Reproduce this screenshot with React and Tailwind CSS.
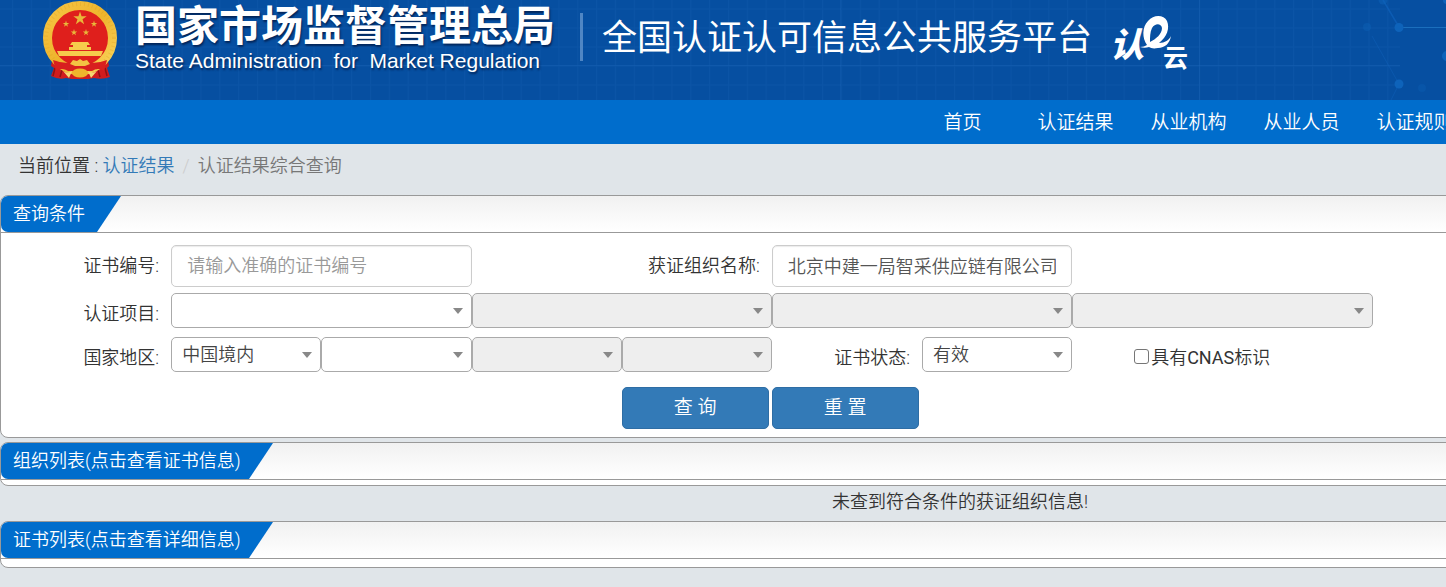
const FONT = "font-['Roboto','Noto_Sans_CJK_SC',sans-serif]";

function Backdrop() {
  return (
    <svg className="absolute inset-0 h-full w-full" aria-hidden="true">
      <defs>
        <pattern id="cells" width="18.84" height="19" x="12" y="8.5" patternUnits="userSpaceOnUse">
          <path d="M0.5 0V19M0 0.5H19" stroke="#1762b3" strokeOpacity="0.3" fill="none" />
        </pattern>
      </defs>
      <rect width="1400" height="100" fill="url(#cells)" />
      <path d="M0 65.500H1400M840.500 0V100M1199.500 0V100" stroke="#2a74c2" strokeOpacity="0.22" />
      <g stroke="#1164bf" strokeOpacity="0.6" fill="none">
        <path d="M1383 0L1399 27" strokeWidth="1.500" />
        <path d="M1399 27.500H1446" stroke="#2a86d0" />
        <path d="M1372 36L1399 84L1391 100" strokeOpacity="0.4" />
      </g>
      <g fill="#0e63ba">
        <circle cx="1399" cy="27.500" r="4.500" />
        <circle cx="1399" cy="84" r="4.500" />
        <circle cx="1367" cy="27" r="4" fillOpacity="0.4" />
        <circle cx="1383" cy="0" r="4.500" fillOpacity="0.5" />
        <circle cx="1422" cy="88" r="4" fillOpacity="0.3" />
        <circle cx="1447" cy="56" r="5" />
        <circle cx="1447" cy="0" r="4" />
      </g>
    </svg>
  );
}

const STAR = "M0 -1L0.225 -0.309L0.951 -0.309L0.363 0.118L0.588 0.809L0 0.382L-0.588 0.809L-0.363 0.118L-0.951 -0.309L-0.225 -0.309Z";

function Emblem() {
  return (
    <svg className="h-20 w-[76px] shrink-0" viewBox="0 0 76 80" role="img" aria-label="国徽">
      <defs>
        <linearGradient id="gold" x1="0" y1="0" x2="1" y2="1">
          <stop offset="0" stopColor="#f6c544" />
          <stop offset="0.5" stopColor="#eeb42c" />
          <stop offset="1" stopColor="#f9d55c" />
        </linearGradient>
      </defs>
      <path d="M11 56L9 66L12 68L9 76Q17 80 24 78L30 79H46L52 78Q60 80 68 77L65 68L67 66L65 56Z" fill="#d01c1e" />
      <path d="M13 68L11 76M20 70L18 77M56 70L58 77M63 68L65 76" stroke="#8f1213" strokeWidth="1.500" />
      <circle cx="38" cy="38" r="32" fill="#df1f1c" />
      <circle cx="38" cy="38" r="32.500" fill="none" stroke="url(#gold)" strokeWidth="9" />
      <circle cx="38" cy="38" r="34" fill="none" stroke="#d99a1e" strokeWidth="4" strokeDasharray="1 3" strokeOpacity="0.3" />
      <g fill="#e9b83a">
        <path d={STAR} transform="translate(38 18.500) scale(7)" />
        <path d={STAR} transform="translate(24 24) scale(3.400)" />
        <path d={STAR} transform="translate(52 24) scale(3.400)" />
        <path d={STAR} transform="translate(32 32.500) scale(3.400)" />
        <path d={STAR} transform="translate(44 32.500) scale(3.400)" />
      </g>
      <path d="M30 42H46L48 45H28ZM31 45H45V47H31ZM27 47H49V50H27ZM15 51H61L59 56H17Z" fill="#f6cb4c" />
      <path d="M11 60Q24 65 32 61Q38 58 44 61Q52 65 65 60L62 71Q56 67 50 71H26Q20 67 14 71Z" fill="#d81f1f" />
      <path d="M28 64L31 60L35 61L38 59L41 61L45 60L48 64L43 66H33Z" fill="#f3c343" />
      <ellipse cx="38" cy="73" rx="8" ry="4.500" fill="#eeb42c" />
      <path d="M21 71Q26 74 30 71L27 78ZM55 71Q50 74 46 71L49 78Z" fill="#f7d873" />
    </svg>
  );
}

function CloudLogo() {
  return (
    <svg className="h-16 w-[84px] shrink-0" viewBox="0 0 84 64" role="img" aria-label="认e云">
      <text x="0" y="47" fontSize="34" fontWeight="900" fontStyle="italic" fill="#fff" className={FONT}>认</text>
      <path
        fillRule="evenodd"
        fill="#fff"
        d="M37 35C32 28 32 17 38 11C44 4 54 5 57 11C60 18 57 27 49 33C55 33 59 30 61 26C60 33 55 38 48 38C43 39 41 38 39 37C36 38 33 38 30 37C33 37 35 36 37 35ZM40 32C46 29 52 24 52 18C51 13 45 13 42 18C40 22 40 27 40 32Z"
      />
      <text x="53" y="57" fontSize="25" fontWeight="700" fill="#fff" className={FONT}>云</text>
    </svg>
  );
}

function Select({ id, label, value = "", disabled = false, className = "" }) {
  return (
    <div className={`grid items-center ${className}`}>
      <select
        id={id}
        aria-label={label}
        disabled={disabled}
        className="col-start-1 row-start-1 h-[35px] w-full appearance-none rounded-[5px] border border-[#aaaaaa] bg-white pr-6 pl-2.5 text-[18px] leading-6 text-[#444444] disabled:bg-[#eeeeee] disabled:opacity-100"
      >
        <option>{value}</option>
      </select>
      <svg className="pointer-events-none col-start-1 row-start-1 mr-[9px] h-1.5 w-2.5 justify-self-end" viewBox="0 0 10 6" aria-hidden="true">
        <path d="M0 0H10L5 6Z" fill="#888888" />
      </svg>
    </div>
  );
}

function PanelHeader({ title, wide = false }) {
  return (
    <div className="flex h-[37px] rounded-tl-[7px] border-b border-[#999999] bg-linear-to-b from-[#f1f1f1] to-white">
      <h2
        className={`flex items-center rounded-l-[7px] bg-[#006dcc] pl-3 text-[18px] leading-6 font-[350] whitespace-nowrap text-white [clip-path:polygon(0_0,100%_0,calc(100%_-_24px)_100%,0_100%)] ${wide ? "w-[272px]" : "w-[120px]"}`}
      >
        {title}
      </h2>
    </div>
  );
}

const NAV = ["首页", "认证结果", "从业机构", "从业人员", "认证规则"];
const LABEL = "pr-3 text-right text-[18px] leading-6 whitespace-nowrap";
const INPUT = "h-[42px] w-full rounded-[5px] border border-[#cccccc] bg-white px-[15px] pb-0.5 text-[18px] leading-6 text-[#555555] shadow-[inset_0_1px_1px_rgba(0,0,0,0.08)] placeholder:text-[#999999]";
const BUTTON = "h-[42px] w-[147px] rounded-[5px] border border-[#2e6da4] bg-[#337ab7] text-[19px] text-white whitespace-pre";

export default function App() {
  return (
    <div className={`min-h-screen overflow-hidden bg-[#e0e5e9] font-[350] text-[#333333] ${FONT}`}>
      <div className="min-w-[1920px]">
        <header className="relative h-[100px] bg-[#064fa1]">
          <Backdrop />
          <div className="relative flex items-start pl-[42px]">
            <Emblem />
            <div className="ml-[17px] w-[445px] text-white [text-shadow:1px_2px_2px_rgba(0,20,60,0.7)]">
              <h1 className="pt-1 text-[42px] leading-[46px] font-bold whitespace-nowrap">国家市场监督管理总局</h1>
              <p className="font-['Liberation_Sans',sans-serif] text-[21px] leading-[22px] font-normal whitespace-pre">State Administration  for  Market Regulation</p>
            </div>
            <div className="mt-[13px] h-12 w-[3px] bg-[#4f86c4]" />
            <p className="ml-[19px] pt-3.5 text-[35px] leading-[50px] font-normal whitespace-nowrap text-white">全国认证认可信息公共服务平台</p>
            <div className="mt-2.5 ml-[18px]">
              <CloudLogo />
            </div>
          </div>
        </header>

        <nav className="flex h-11 items-center bg-[#006dcc] pt-0.5 pl-[906px]">
          {NAV.map((item) => (
            <a key={item} href="#" className="w-[113px] text-center text-[19px] leading-6 whitespace-nowrap text-white">
              {item}
            </a>
          ))}
        </nav>

        <div className="flex h-[51px] items-start pt-2.5 pl-[18px] text-[18px] leading-6">
          <span className="whitespace-pre">当前位置 : </span>
          <a href="#" className="text-[#337ab7]">认证结果</a>
          <span className="px-2 text-[#cccccc]">/</span>
          <span className="text-[#777777]">认证结果综合查询</span>
        </div>

        <section className="mb-1 rounded-[8px] border border-[#999999] bg-white pb-2">
          <PanelHeader title="查询条件" />
          <form className="mr-24 ml-5 grid grid-cols-12 items-center pt-3">
            <label htmlFor="cert-no" className={LABEL}>证书编号:</label>
            <input id="cert-no" placeholder="请输入准确的证书编号" className={`${INPUT} col-span-2`} />
            <label htmlFor="org-name" className={`${LABEL} col-span-2`}>获证组织名称:</label>
            <input id="org-name" defaultValue="北京中建一局智采供应链有限公司" className={`${INPUT} col-span-2`} />
            <div className="col-span-5" />

            <label htmlFor="project" className={`${LABEL} mt-3`}>认证项目:</label>
            <Select id="project" className="col-span-2 mt-1.5" />
            <Select label="认证项目二级" disabled className="col-span-2 mt-1.5" />
            <Select label="认证项目三级" disabled className="col-span-2 mt-1.5" />
            <Select label="认证项目四级" disabled className="col-span-2 mt-1.5" />
            <div className="col-span-3" />

            <label htmlFor="region" className={`${LABEL} mt-4`}>国家地区:</label>
            <Select id="region" value="中国境内" className="mt-[9px]" />
            <Select label="省" className="mt-[9px]" />
            <Select label="市" disabled className="mt-[9px]" />
            <Select label="县" disabled className="mt-[9px]" />
            <label htmlFor="status" className={`${LABEL} mt-4`}>证书状态:</label>
            <Select id="status" value="有效" className="mt-[9px]" />
            <div className="col-span-2 mt-4 flex items-center pl-[62px]">
              <input id="cnas" type="checkbox" className="mr-0.5 mb-1 size-[15px] appearance-none rounded-[3px] border border-[#767676] bg-white" />
              <label htmlFor="cnas" className="text-[18px] leading-6 whitespace-nowrap">
                具有<span className="font-normal">CNAS</span>标识
              </label>
            </div>
            <div className="col-span-3" />

            <div className="col-span-8 col-start-5 mt-[15px] flex gap-[3px]">
              <button type="submit" className={BUTTON}>查 询</button>
              <button type="reset" className={BUTTON}>重 置</button>
            </div>
          </form>
        </section>

        <section className="rounded-[8px] border border-[#999999] bg-white pb-[5px]">
          <PanelHeader title="组织列表(点击查看证书信息)" wide />
        </section>
        <p className="pt-1 pb-[7px] text-center text-[18px] leading-6">未查到符合条件的获证组织信息!</p>
        <section className="rounded-[8px] border border-[#999999] bg-white pb-2">
          <PanelHeader title="证书列表(点击查看详细信息)" wide />
        </section>
      </div>
    </div>
  );
}
